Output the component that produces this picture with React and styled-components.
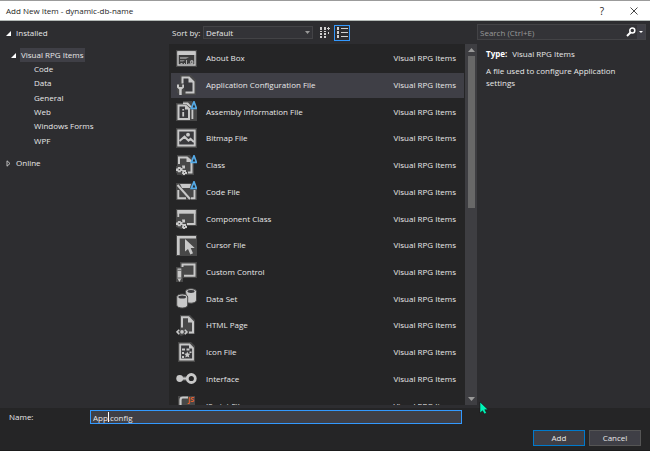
import React, { useState } from 'react'
import styled, { createGlobalStyle } from 'styled-components'

const GlobalStyle = createGlobalStyle`
  * {
    box-sizing: border-box;
  }

  body {
    margin: 0;
    background: #252526;
    color: #e8e8e8;
    font-family: "Open Sans", "Noto Sans", sans-serif;
    font-size: 8px;
    line-height: 12px;
  }

  button, input, select {
    font: inherit;
    color: inherit;
  }
`

const Dialog = styled.div`
  height: 100vh;
  display: flex;
  flex-direction: column;
  overflow: hidden;
  border-bottom: 1px solid #1b1b1c;
`

const TitleBar = styled.header`
  flex: none;
  height: 21px;
  display: flex;
  align-items: center;
  padding: 0 8px 0 6px;
  background: #fff;
  color: #1e1e1e;
  border-top: 1px solid #9b9b9b;
  border-bottom: 1px solid #b4bab7;
`

const Title = styled.h1`
  flex: 1;
  margin: 0;
  font-size: 8px;
  font-weight: 400;
`

const WindowButton = styled.button`
  width: 16px;
  height: 16px;
  margin-left: 16px;
  padding: 0;
  display: flex;
  align-items: center;
  justify-content: center;
  border: none;
  background: none;
  font-size: 10px;
`

const Body = styled.main`
  flex: 1;
  min-height: 0;
  display: grid;
  grid-template-columns: 169px minmax(0, 1fr) 173px;
  background: #2d2d30;
`

const Sidebar = styled.nav`
  padding: 5px 6px;
  display: flex;
  flex-direction: column;
  align-items: flex-start;
`

const TreeButton = styled.button`
  height: 14px;
  padding: 0;
  display: flex;
  align-items: center;
  gap: 4px;
  border: none;
  background: none;
  margin-left: ${(p) => (p.$nested ? '5px' : '0')};
  margin-top: ${(p) => (p.$spaced ? '8px' : '0')};
`

const TreeLabel = styled.span`
  height: 14px;
  padding: 0 1px;
  line-height: 14px;
  background: ${(p) => (p.$selected ? '#3f3f46' : 'none')};
`

const TreeChildren = styled.ul`
  height: 86px;
  margin: 0;
  padding: 0 0 0 28px;
  display: grid;
  grid-auto-rows: 1fr;
  align-items: center;
  list-style: none;
`

const TreeLeaf = styled.button`
  display: block;
  padding: 0;
  border: none;
  background: none;
`

const Middle = styled.section`
  min-height: 0;
  display: flex;
  flex-direction: column;
  padding-bottom: 3px;
`

const Toolbar = styled.div`
  flex: none;
  height: 23px;
  display: flex;
  align-items: center;
  padding-left: 3px;
`

const SortLabel = styled.label`
  width: 28px;
  white-space: nowrap;
`

const SelectWrap = styled.div`
  position: relative;
  width: 110px;
  margin: 0 4px 0 3px;
`

const SortSelect = styled.select`
  display: block;
  width: 100%;
  height: 13px;
  padding: 0 2px;
  line-height: 11px;
  appearance: none;
  background: #333337;
  border: 1px solid #434346;
  border-radius: 0;
`

const SelectArrow = styled.svg`
  position: absolute;
  top: 5px;
  right: 3px;
  pointer-events: none;
`

const ViewButton = styled.button`
  width: 16px;
  height: 16px;
  margin-right: 1px;
  padding: 0;
  display: flex;
  align-items: center;
  justify-content: center;
  background: none;
  border: 1px solid ${(p) => (p.$active ? '#3399ff' : 'transparent')};
`

const ListArea = styled.div`
  flex: 1;
  min-height: 0;
  display: flex;
  background: #252526;
`

const ListClip = styled.div`
  flex: 1;
  min-width: 0;
  padding: 1px 1px 0 2px;
  overflow: hidden;
`

const ItemList = styled.ul`
  height: 374px;
  margin: 0;
  padding: 0;
  display: grid;
  grid-auto-rows: 1fr;
  align-items: center;
  list-style: none;
`

const ItemRow = styled.button`
  width: 100%;
  height: 25px;
  padding: 0 8px 0 5px;
  display: flex;
  align-items: center;
  gap: 9px;
  border: none;
  text-align: left;
  background: ${(p) => (p.$selected ? '#3f3f46' : 'transparent')};
`

const ItemName = styled.span`
  flex: 1;
`

const ScrollBar = styled.div`
  flex: none;
  width: 12px;
  display: flex;
  flex-direction: column;
  align-items: center;
  background: #3e3e42;
`

const ScrollButton = styled.button`
  width: 12px;
  height: 12px;
  padding: 0;
  display: flex;
  align-items: center;
  justify-content: center;
  border: none;
  background: none;
`

const ScrollTrack = styled.div`
  flex: 1;
  width: 7px;
`

const ScrollThumb = styled.div`
  height: 45%;
  background: #686868;
`

const Details = styled.aside`
  padding: 3px 4px 0 0;
`

const SearchBox = styled.div`
  height: 16px;
  display: flex;
  align-items: center;
  background: #333337;
  border: 1px solid #434346;
`

const SearchInput = styled.input`
  flex: 1;
  min-width: 0;
  height: 14px;
  padding: 0 2px;
  border: none;
  outline: none;
  background: none;

  &::placeholder {
    color: #999;
    opacity: 1;
  }
`

const SearchButton = styled.button`
  width: ${(p) => p.$width};
  height: 14px;
  padding: 0;
  display: flex;
  align-items: center;
  justify-content: center;
  border: none;
  background: ${(p) => p.$fill || 'none'};
`

const Info = styled.div`
  padding: 8px 20px 0 9px;

  p {
    margin: 0 0 5px;
  }

  strong {
    margin-right: 5px;
    color: #fff;
  }
`

const Footer = styled.footer`
  flex: none;
  padding: 2px 9px 4px;
`

const NameRow = styled.div`
  display: flex;
  align-items: center;
  margin-bottom: 6px;
`

const NameLabel = styled.label`
  width: 81px;
`

const NameField = styled.div`
  position: relative;
  flex: 1;
  margin-right: 179px;
`

const NameInput = styled.input`
  display: block;
  width: 100%;
  height: 14px;
  padding: 0 2px;
  background: #3f3f46;
  border: 1px solid #3399ff;
  border-radius: 0;
  outline: none;
`

const Caret = styled.span`
  position: absolute;
  top: 2px;
  left: 18px;
  width: 1px;
  height: 10px;
  background: #fff;
`

const Actions = styled.div`
  display: flex;
  justify-content: flex-end;
  gap: 4px;
`

const ActionButton = styled.button`
  width: 52px;
  height: 16px;
  padding: 0;
  line-height: 14px;
  background: #3f3f46;
  border: 1px solid ${(p) => (p.$primary ? '#007acc' : '#555555')};
`

const Pointer = styled.svg`
  position: absolute;
  left: 479px;
  top: 401px;
  pointer-events: none;
`

const F = '#c8c8c8'
const D = '#484848'

const Badge = () => <path d="M15.3 7.3 18 .8l2.4 6.5z" fill="#252526" stroke="#55aae6" strokeWidth="1.7" />

const Gears = ({ y = 0 }) => (
  <g transform={`translate(0 ${y})`}>
    <path d="M0 11h6l4-1v4l1 5-2 1.500H6L0 18z" fill={D} />
    <path d="M2 12h2.500l.5 1h1.500v3H5l-.5 1.300H2L1.500 16H0v-2.500h1.500zM6 10.500h3v3H6.500zM6.500 15h3.500v2h1v2H9v1H7v-1H6z" fill={F} />
    <path d="M2.700 14h1.300v1.200H2.700zM8 17h1v1H8z" fill={D} />
  </g>
)

const icons = {
  about: (
    <>
      <path d="M0 2h21v17H0z" fill={D} />
      <path d="M2 4h17v13H2z" fill="#3b3b3b" stroke={F} strokeWidth="1.4" />
      <path d="M1.5 3.3h18V7h-18z" fill={F} />
      <path d="M4 9h9l-3 2H4zM4 12h5l-2 1.5H4z" fill="#858585" />
      <path d="M4.5 15.5h2M8 15.5h1M10.5 12v4.5M12.5 15.500h1" stroke="#aaa" />
      <path d="M14.8 12.800h2v3h-2z" fill="none" stroke={F} />
    </>
  ),
  config: (
    <>
      <path d="M4 0h11l5 5v15H6L1 18v-8l3-2z" fill={D} />
      <path d="M6.5 8.5v-6H13l4.5 4.5v10.500h-8" fill="#39393c" stroke={F} strokeWidth="2" />
      <path d="M12.5 2v5.5H18z" fill={F} />
      <path d="M1 9.500v3l2.200 2V20h2.500v-5.500L8 12.500v-3H6.200v2.600H3V9.500z" fill={F} />
    </>
  ),
  assembly: (
    <>
      <path d="M0 2h7V0h9l5 8v12H0z" fill={D} />
      <path d="M2.5 4.500h7L13 8v10H2.500z" fill="#39393c" stroke={F} strokeWidth="2" />
      <path d="M9 4v4.500h4.400zM7 1.500h5l3.500 4-1 1.200L10 3H7zM15.500 8.500h1.800V18h-1.800z" fill={F} />
      <path d="M6.300 8h1.800v1.600H6.300zM6.300 11h1.800v4.500H6.300z" fill={F} />
      <Badge />
    </>
  ),
  bitmap: (
    <>
      <path d="M0 0h21v20H0z" fill={D} />
      <path d="M2.300 2.500h16.400v15H2.300z" fill="#39393c" stroke={F} strokeWidth="1.9" />
      <path d="m3.500 13 5-4.300 4 4 2-1.800 3.500 3" fill="none" stroke={F} strokeWidth="2" />
      <circle cx="12" cy="6.700" r="1.900" fill={F} />
    </>
  ),
  class: (
    <>
      <path d="M1 0h13l4 6v14H1z" fill={D} />
      <path d="M3 9V2.500h8l4.500 4v11H12" fill="none" stroke={F} strokeWidth="2" />
      <path d="M10.500 2v5h5z" fill={F} />
      <Gears />
      <Badge />
    </>
  ),
  code: (
    <>
      <path d="M0 2h15l6 5v12H0z" fill={D} />
      <path d="M4 3h11l-1.200 4H6z" fill={F} />
      <path d="M1.500 4 14 18" stroke={F} strokeWidth="2" />
      <path d="M2.300 9v8.300H10M18.500 9v8.300H15" fill="none" stroke={F} strokeWidth="1.9" />
      <Badge />
    </>
  ),
  component: (
    <>
      <path d="M0 1h21v17H0z" fill={D} />
      <path d="M2.300 9V3h16.400v13H11" fill="none" stroke={F} strokeWidth="1.8" />
      <path d="M1.500 2h18v3.700h-18z" fill={F} />
      <Gears y={1} />
    </>
  ),
  cursor: (
    <>
      <path d="M0 0h21v21H0z" fill={D} />
      <path d="M1 1h19v2.600H3.700V20H1z" fill={F} />
      <path d="M9 4v12.600l3-2.600 2.400 5.400 2.600-1.100-2.300-5.200h4z" fill={F} />
    </>
  ),
  control: (
    <>
      <path d="M4 0h17v16H7v4H0V5h4z" fill={D} />
      <path d="M6.500 5V2.500h12v11.300H8" fill="none" stroke={F} strokeWidth="2" />
      <path d="M1.500 6.500h3.800v10L3.400 20l-1.900-3.500z" fill={F} />
      <path d="M1.500 8.300h3.800M1.500 16h3.800" stroke={D} strokeWidth=".8" />
    </>
  ),
  data: (
    <>
      <path d="M9.500 3.500C9.500-.2 20.500-.2 20.500 3.500V12c0 3-6 4-9.500 2.500z" fill={F} stroke={D} />
      <ellipse cx="15" cy="3.500" rx="3.600" ry="1.400" fill="#39393c" />
      <path d="M.7 9c0-4 11-4 11 0v8c0 4-11 4-11 0z" fill={F} stroke={D} />
      <ellipse cx="6.200" cy="9" rx="3.800" ry="1.500" fill="#39393c" />
    </>
  ),
  html: (
    <>
      <path d="M4 0h10l5 5v14H10l-5 2-4-3 3-4z" fill={D} />
      <path d="M6 12.500V2.300h6.500L17 7v10.500h-4" fill="none" stroke={F} strokeWidth="2" />
      <path d="M12 2v5.400h5z" fill={F} />
      <path d="m3.200 14.700-2.200 2.200 2.200 2.200M8.800 14.700l2.200 2.200-2.200 2.200" fill="none" stroke={F} strokeWidth="1.5" />
      <circle cx="6" cy="16.900" r="1.800" fill={F} />
    </>
  ),
  icon: (
    <>
      <path d="M2 0h13l4 4v16H2z" fill={D} />
      <path d="M4.200 2.500h9.300L17 6v11.500H4.200z" fill="#39393c" stroke={F} strokeWidth="1.8" />
      <path d="M13 2v4.400h4.400z" fill={F} />
      <path d="M6 6.500h3v2H6zM10.500 6.500h3v2h-3zM6 10h2v2H6zM6 14h2v2H6zM13.500 9.500h2v1.600h-2z" fill={F} />
      <path d="m11.300 9.500.9 2 2.200.2-1.600 1.600.5 2.300-2-1.100-2 1.100.5-2.300-1.600-1.600 2.200-.2z" fill={F} />
    </>
  ),
  interface: (
    <>
      <path d="M3 10.500h12" stroke={D} strokeWidth="5" />
      <circle cx="3.700" cy="10.500" r="3.400" fill={F} />
      <path d="M4 10.500h8" stroke={F} strokeWidth="2.200" />
      <circle cx="15.300" cy="10.500" r="4" fill="#252526" stroke={F} strokeWidth="2.800" />
    </>
  ),
  script: (
    <>
      <path d="M2 1h17v18H2z" fill={D} />
      <path d="M4.500 18V5q0-2.500 2.500-2.500h5M16 10v8" fill="none" stroke={F} strokeWidth="2.200" />
      <text x="12" y="7" fontSize="7" fontWeight="700" fill="#e8622c">JS</text>
    </>
  ),
}

const items = [
  ['About Box', 'about'],
  ['Application Configuration File', 'config'],
  ['Assembly Information File', 'assembly'],
  ['Bitmap File', 'bitmap'],
  ['Class', 'class'],
  ['Code File', 'code'],
  ['Component Class', 'component'],
  ['Cursor File', 'cursor'],
  ['Custom Control', 'control'],
  ['Data Set', 'data'],
  ['HTML Page', 'html'],
  ['Icon File', 'icon'],
  ['Interface', 'interface'],
  ['JScript File', 'script'],
]

const categories = ['Code', 'Data', 'General', 'Web', 'Windows Forms', 'WPF']

const Expanded = () => (
  <svg width="5" height="5" viewBox="0 0 5 5">
    <path d="M5 0v5H0z" fill="#fff" />
  </svg>
)

const Collapsed = () => (
  <svg width="5" height="7" viewBox="0 0 5 7">
    <path d="M1 .8v5.400l3-2.700z" fill="none" stroke="#ccc" strokeWidth=".9" />
  </svg>
)

const App = () => {
  const [selected, setSelected] = useState('Application Configuration File')
  const [name, setName] = useState('App.config')

  return (
    <Dialog>
      <GlobalStyle />
      <TitleBar>
        <Title>Add New Item - dynamic-db-name</Title>
        <WindowButton aria-label="Help">?</WindowButton>
        <WindowButton aria-label="Close">
          <svg width="8" height="8" viewBox="0 0 8 8">
            <path d="m.5.5 7 7m0-7-7 7" stroke="#333" strokeWidth=".9" />
          </svg>
        </WindowButton>
      </TitleBar>

      <Body>
        <Sidebar>
          <TreeButton aria-expanded="true">
            <Expanded />
            <TreeLabel>Installed</TreeLabel>
          </TreeButton>
          <TreeButton $nested $spaced aria-expanded="true">
            <Expanded />
            <TreeLabel $selected>Visual RPG Items</TreeLabel>
          </TreeButton>
          <TreeChildren>
            {categories.map((c) => (
              <li key={c}>
                <TreeLeaf>{c}</TreeLeaf>
              </li>
            ))}
          </TreeChildren>
          <TreeButton $spaced aria-expanded="false">
            <Collapsed />
            <TreeLabel>Online</TreeLabel>
          </TreeButton>
        </Sidebar>

        <Middle>
          <Toolbar>
            <SortLabel htmlFor="sort">Sort by:</SortLabel>
            <SelectWrap>
              <SortSelect id="sort" defaultValue="Default">
                <option>Default</option>
                <option>Name Ascending</option>
                <option>Name Descending</option>
              </SortSelect>
              <SelectArrow width="5" height="3" viewBox="0 0 5 3">
                <path d="M0 0h5L2.500 3z" fill="#999" />
              </SelectArrow>
            </SelectWrap>
            <ViewButton aria-label="Small icons">
              <svg width="11" height="11" viewBox="0 0 11 11">
                <path d="M0 0h2v3H0zM4 0h2v3H4zM0 4h2v1H0zM4 4h2v1H4zM0 6h2v2H0zM4 6h2v2H4zM0 9h2v2H0zM4 9h2v2H4zM7 1h3v1H7zM8 0h1v3H8zM8 5h1v2H8z" fill="#d0d0d0" />
              </svg>
            </ViewButton>
            <ViewButton $active aria-label="Medium icons">
              <svg width="11" height="11" viewBox="0 0 11 11">
                <path d="M0 0h2v3H0zM0 4h2v3H0zM0 8h2v3H0zM4 1h7v1H4zM4 5h7v1H4zM4 9h7v1H4z" fill="#d0d0d0" />
              </svg>
            </ViewButton>
          </Toolbar>

          <ListArea>
            <ListClip>
              <ItemList>
                {items.map(([label, icon]) => (
                  <li key={label}>
                    <ItemRow $selected={selected === label} onClick={() => setSelected(label)}>
                      <svg width="21" height="21" viewBox="0 0 21 21">{icons[icon]}</svg>
                      <ItemName>{label}</ItemName>
                      <span>Visual RPG Items</span>
                    </ItemRow>
                  </li>
                ))}
              </ItemList>
            </ListClip>
            <ScrollBar>
              <ScrollButton aria-label="Scroll up">
                <svg width="7" height="4" viewBox="0 0 7 4"><path d="M0 4h7L3.500 0z" fill="#999" /></svg>
              </ScrollButton>
              <ScrollTrack>
                <ScrollThumb />
              </ScrollTrack>
              <ScrollButton aria-label="Scroll down">
                <svg width="7" height="4" viewBox="0 0 7 4"><path d="M0 0h7L3.500 4z" fill="#999" /></svg>
              </ScrollButton>
            </ScrollBar>
          </ListArea>
        </Middle>

        <Details>
          <SearchBox>
            <SearchInput type="search" aria-label="Search" placeholder="Search (Ctrl+E)" />
            <SearchButton $width="13px" aria-label="Search">
              <svg width="10" height="10" viewBox="0 0 10 10">
                <circle cx="6.3" cy="3.6" r="2.5" fill="none" stroke="#fff" strokeWidth="1.5" />
                <path d="M4.500 5.500 1 9" stroke="#fff" strokeWidth="2" />
              </svg>
            </SearchButton>
            <SearchButton $width="8px" $fill="#3f3f46" aria-label="Search options">
              <svg width="4" height="2" viewBox="0 0 4 2"><path d="M0 0h4L2 2z" fill="#fff" /></svg>
            </SearchButton>
          </SearchBox>
          <Info>
            <p><strong>Type:</strong>Visual RPG Items</p>
            <p>A file used to configure Application settings</p>
          </Info>
        </Details>
      </Body>

      <Footer>
        <NameRow>
          <NameLabel htmlFor="name">Name:</NameLabel>
          <NameField>
            <NameInput id="name" value={name} onChange={(e) => setName(e.target.value)} />
            <Caret />
          </NameField>
        </NameRow>
        <Actions>
          <ActionButton $primary>Add</ActionButton>
          <ActionButton>Cancel</ActionButton>
        </Actions>
      </Footer>

      <Pointer width="11" height="14" viewBox="0 0 11 14">
        <path d="M1 1v11l2.500-2.300L5.500 13l2-1-1.700-3.300H9z" fill="#00f5b8" stroke="#111" strokeWidth=".5" />
      </Pointer>
    </Dialog>
  )
}

export default App
